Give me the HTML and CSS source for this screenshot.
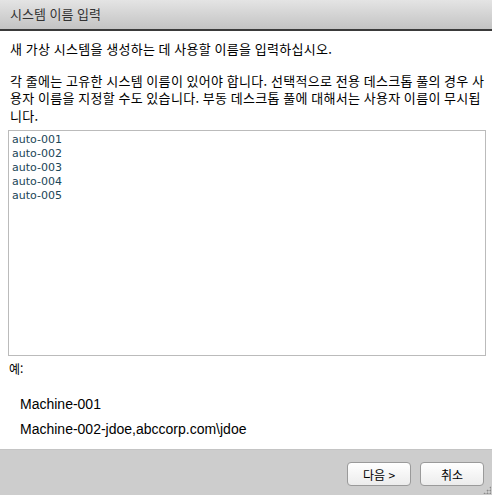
FILE: index.html
```html
<!DOCTYPE html>
<html lang="ko">
<head>
    <meta charset="UTF-8">
    <meta name="viewport" content="width=device-width, initial-scale=1.0">
    <title>시스템 이름 입력</title>
    <link rel="stylesheet" href="styles.css">
</head>
<body>
    <div class="dialog">
        <div class="titlebar">시스템 이름 입력</div>
        <div class="content">
            <p class="intro">새 가상 시스템을 생성하는 데 사용할 이름을 입력하십시오.</p>
            <p class="note">각 줄에는 고유한 시스템 이름이 있어야 합니다. 선택적으로 전용 데스크톱 풀의 경우 사용자 이름을 지정할 수도 있습니다. 부동 데스크톱 풀에 대해서는 사용자 이름이 무시됩니다.</p>
            <textarea class="names">auto-001
auto-002
auto-003
auto-004
auto-005</textarea>
            <div class="example-label">예:</div>
            <div class="example">Machine-001</div>
            <div class="example">Machine-002-jdoe,abccorp.com\jdoe</div>
        </div>
        <div class="footer">
            <button class="btn">다음 &gt;</button>
            <button class="btn">취소</button>
            <span class="grip"></span>
        </div>
    </div>
</body>
</html>
```

FILE: styles.css
```css
body {
    margin: 0;
    background-color: #ffffff;
    font-family: "Noto Sans CJK KR", "DejaVu Sans", sans-serif;
    color: #000;
}
.dialog {
    width: 492px;
    height: 495px;
    display: flex;
    flex-direction: column;
    overflow: hidden;
}
.titlebar {
    height: 29px;
    line-height: 28px;
    padding-left: 10px;
    font-size: 13px;
    color: #333;
    background: linear-gradient(#e4e4e4, #c3c3c3);
    border-bottom: 2px solid #3a3a3a;
}
.content {
    flex: 1;
    padding: 0 0 0 8px;
}
.intro, .note {
    margin: 0;
    padding-left: 2px;
    font-size: 13px;
    line-height: 17.5px;
    letter-spacing: 0.3px;
    word-spacing: -0.5px;
    word-break: break-all;
}
.intro {
    margin-top: 9px;
}
.note {
    width: 476px;
    margin-top: 14px;
}
.names {
    display: block;
    box-sizing: border-box;
    width: 478px;
    height: 226px;
    margin: 6px 0 0 0;
    padding: 2px 3px;
    border: 1px solid #bbbbbb;
    resize: none;
    font-family: "DejaVu Sans", sans-serif;
    font-size: 11px;
    line-height: 14px;
    color: #1a4658;
    outline: none;
}
.example-label {
    margin-top: 4px;
    font-size: 12px;
    line-height: 17px;
    padding-left: 1px;
}
.example {
    font-family: "Liberation Sans", sans-serif;
    font-size: 14px;
    line-height: 25px;
    padding-left: 12px;
}
.example-label + .example {
    margin-top: 15px;
}
.footer {
    position: relative;
    height: 46px;
    box-sizing: border-box;
    border-top: 1px solid #c4c4c4;
    background-color: #cdcdcd;
    display: flex;
    justify-content: flex-end;
    align-items: flex-start;
    gap: 9px;
    padding: 12px 8px 0 0;
}
.btn {
    width: 64px;
    height: 24px;
    border: 1px solid #9a9a9a;
    border-radius: 4px;
    background: linear-gradient(#ffffff, #ececec);
    font-family: "Noto Sans CJK KR", sans-serif;
    font-size: 12px;
    color: #000;
    padding: 0;
}
.grip {
    position: absolute;
    right: 1px;
    bottom: 1px;
    width: 8px;
    height: 8px;
    background:
        radial-gradient(circle, #8a8a8a 0.8px, transparent 1.2px) 0 0 / 3px 3px;
    clip-path: polygon(100% 0, 100% 100%, 0 100%);
}
```
